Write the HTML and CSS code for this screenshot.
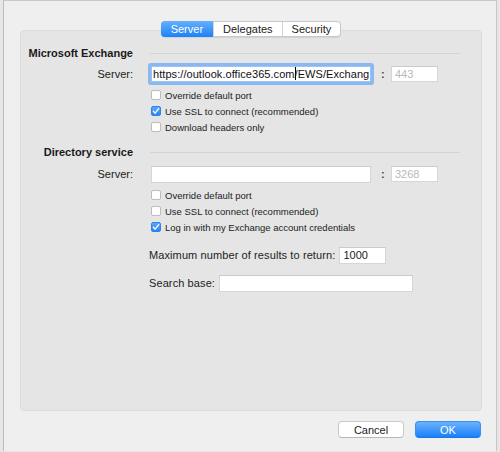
FILE: index.html
```html
<!DOCTYPE html>
<html lang="en">
<head>
    <meta charset="UTF-8">
    <title>Exchange Account Settings</title>
    <link rel="stylesheet" href="styles.css">
</head>
<body>
    <div class="screen">
        <div class="window">
            <div class="sheet">
                <!-- Segmented tab control, overlaps the panel border -->
                <div class="tabs">
                    <span class="tab is-active">Server</span>
                    <span class="tab">Delegates</span>
                    <span class="tab">Security</span>
                </div>

                <div class="panel">
                    <!-- Microsoft Exchange -->
                    <div class="row row-head">
                        <h2 class="section-title">Microsoft Exchange</h2>
                        <div class="rule"></div>
                    </div>
                    <div class="row row-field">
                        <span class="label">Server:</span>
                        <div class="field">
                            <div class="input input-server is-focused">https://outlook.office365.com<span class="caret"></span>/EWS/Exchang</div>
                            <span class="colon">:</span>
                            <div class="input input-port placeholder">443</div>
                        </div>
                    </div>
                    <div class="row row-check first">
                        <label class="checkbox"><span class="box"></span>Override default port</label>
                    </div>
                    <div class="row row-check">
                        <label class="checkbox"><span class="box is-checked"><svg width="8" height="8" viewBox="0 0 8 8"><path d="M1.4 4.3L3.2 6.2L6.7 1.6" fill="none" stroke="#fff" stroke-width="1.3" stroke-linecap="round" stroke-linejoin="round"/></svg></span>Use SSL to connect (recommended)</label>
                    </div>
                    <div class="row row-check">
                        <label class="checkbox"><span class="box"></span>Download headers only</label>
                    </div>

                    <!-- Directory service -->
                    <div class="row row-head second">
                        <h2 class="section-title">Directory service</h2>
                        <div class="rule"></div>
                    </div>
                    <div class="row row-field second">
                        <span class="label">Server:</span>
                        <div class="field">
                            <div class="input input-server"></div>
                            <span class="colon">:</span>
                            <div class="input input-port placeholder">3268</div>
                        </div>
                    </div>
                    <div class="row row-check first">
                        <label class="checkbox"><span class="box"></span>Override default port</label>
                    </div>
                    <div class="row row-check">
                        <label class="checkbox"><span class="box"></span>Use SSL to connect (recommended)</label>
                    </div>
                    <div class="row row-check">
                        <label class="checkbox"><span class="box is-checked"><svg width="8" height="8" viewBox="0 0 8 8"><path d="M1.4 4.3L3.2 6.2L6.7 1.6" fill="none" stroke="#fff" stroke-width="1.3" stroke-linecap="round" stroke-linejoin="round"/></svg></span>Log in with my Exchange account credentials</label>
                    </div>

                    <div class="row row-field row-max">
                        <div class="field inline">
                            <span class="label-inline">Maximum number of results to return:</span>
                            <div class="input input-max">1000</div>
                        </div>
                    </div>
                    <div class="row row-field row-search">
                        <div class="field inline">
                            <span class="label-inline">Search base:</span>
                            <div class="input input-search"></div>
                        </div>
                    </div>
                </div>

                <div class="actions">
                    <button class="btn">Cancel</button>
                    <button class="btn btn-primary">OK</button>
                </div>
            </div>
        </div>
    </div>
</body>
</html>
```

FILE: styles.css
```css
/* Base */
body {
    margin: 0;
    font-family: "Liberation Sans", Arial, sans-serif;
    font-size: 11px;
    color: #222;
}

.screen {
    width: 500px;
    height: 452px;
    background: #e6e6e6;
    display: flex;
    overflow: hidden;
}

.window {
    margin-left: 3px;
    width: 494px;
    height: 451px;
    border-left: 1px solid #bdbdbd;
    border-right: 1px solid #c6c6c6;
    border-top: 1px solid #c8c8c8;
    background: #efefef;
    padding: 20px 0 0 16px;
    box-sizing: border-box;
}

.sheet {
    width: 462px;
    display: flex;
    flex-direction: column;
}

/* Tabs */
.tabs {
    align-self: center;
    display: flex;
    position: relative;
    z-index: 1;
    height: 16px;
    margin-bottom: -7px;
    background: #fff;
    border: 1px solid #c9c9c9;
    border-radius: 4px;
    box-sizing: border-box;
    box-shadow: 0 0.5px 1px rgba(0, 0, 0, 0.08);
}

.tab {
    padding: 0 9px;
    line-height: 14px;
    border-left: 1px solid #d4d4d4;
    color: #222;
}

.tab:first-child {
    border-left: none;
}

.tab.is-active {
    margin: -1px 0 -1px -1px;
    padding: 1px 10px;
    background: linear-gradient(#67b0fb, #1c81f9);
    color: #fff;
    border-radius: 4px 0 0 4px;
}

/* Panel */
.panel {
    height: 381px;
    box-sizing: border-box;
    background: #e5e5e5;
    border: 1px solid #dcdcdc;
    border-radius: 4px;
    padding: 15px 21px 0 0;
}

.row {
    display: grid;
    grid-template-columns: 112px 1fr;
    column-gap: 18px;
    align-items: center;
}

.row-head {
    height: 14px;
}

.row-head.second {
    margin-top: 10px;
}

.section-title {
    margin: 0;
    font-size: 11px;
    font-weight: bold;
    text-align: right;
    color: #1a1a1a;
}

.rule {
    height: 1px;
    margin-left: -1px;
    background: #d3d3d3;
}

.row-field {
    height: 22px;
    margin-top: 3px;
}

.row-field.second {
    margin-top: 4px;
}

.label {
    text-align: right;
}

.field {
    display: flex;
    align-items: center;
}

.row-max,
.row-search {
    grid-template-columns: 1fr;
    padding-left: 129px;
}

.row-max {
    margin-top: 9px;
}

.row-search {
    margin-top: 6px;
}

.label-inline {
    margin-left: -1px;
    letter-spacing: 0.1px;
}

/* Inputs */
.input {
    height: 17px;
    box-sizing: border-box;
    background: #fff;
    border: 1px solid #d6d6d6;
    border-top-color: #cbcbcb;
    padding: 0 2px;
    line-height: 15px;
    white-space: nowrap;
    overflow: hidden;
}

.input-server {
    width: 220px;
}

.input-server.is-focused {
    height: 16px;
    padding-left: 1px;
    border-color: #9fc2ef;
    border-radius: 1px;
    box-shadow: 0 0 0 3px #8ab8f1;
    line-height: 14px;
    letter-spacing: 0.06px;
    color: #111;
}

.caret {
    display: inline-block;
    width: 1px;
    height: 13px;
    margin-right: -1px;
    vertical-align: -2px;
    background: #000;
}

.colon {
    width: 20px;
    padding-left: 10px;
    box-sizing: border-box;
    font-weight: bold;
    color: #444;
}

.input-port {
    width: 47px;
    height: 16px;
    padding-left: 3px;
}

.placeholder {
    color: #b9b9b9;
}

.input-max {
    width: 47px;
    margin-left: 4px;
    padding-left: 3px;
}

.input-search {
    width: 194px;
    margin-left: 4px;
}

/* Checkboxes */
.row-check {
    height: 16px;
}

.row-check.first {
    margin-top: 2px;
}

.checkbox {
    grid-column: 2;
    display: flex;
    align-items: center;
    font-size: 9.5px;
    color: #222;
}

.box {
    width: 10px;
    height: 10px;
    margin-right: 4px;
    box-sizing: border-box;
    background: #fff;
    border: 1px solid #bcbcbc;
    border-radius: 2px;
    display: flex;
    align-items: center;
    justify-content: center;
}

.box.is-checked {
    background: linear-gradient(#5aa6fa, #2a86f5);
    border-color: #2d83ec;
}

/* Buttons */
.actions {
    display: flex;
    justify-content: flex-end;
    gap: 11px;
    margin-top: 10px;
    padding-right: 1px;
}

.btn {
    width: 66px;
    height: 17px;
    padding: 0;
    font-family: inherit;
    font-size: 11px;
    color: #222;
    background: #fff;
    border: 1px solid #cacaca;
    border-bottom-color: #b8b8b8;
    border-radius: 4px;
}

.btn-primary {
    color: #fff;
    background: linear-gradient(#6ab2fb, #1a80f9);
    border-color: #3b8ef3;
    border-bottom-color: #1f74e0;
}
```
